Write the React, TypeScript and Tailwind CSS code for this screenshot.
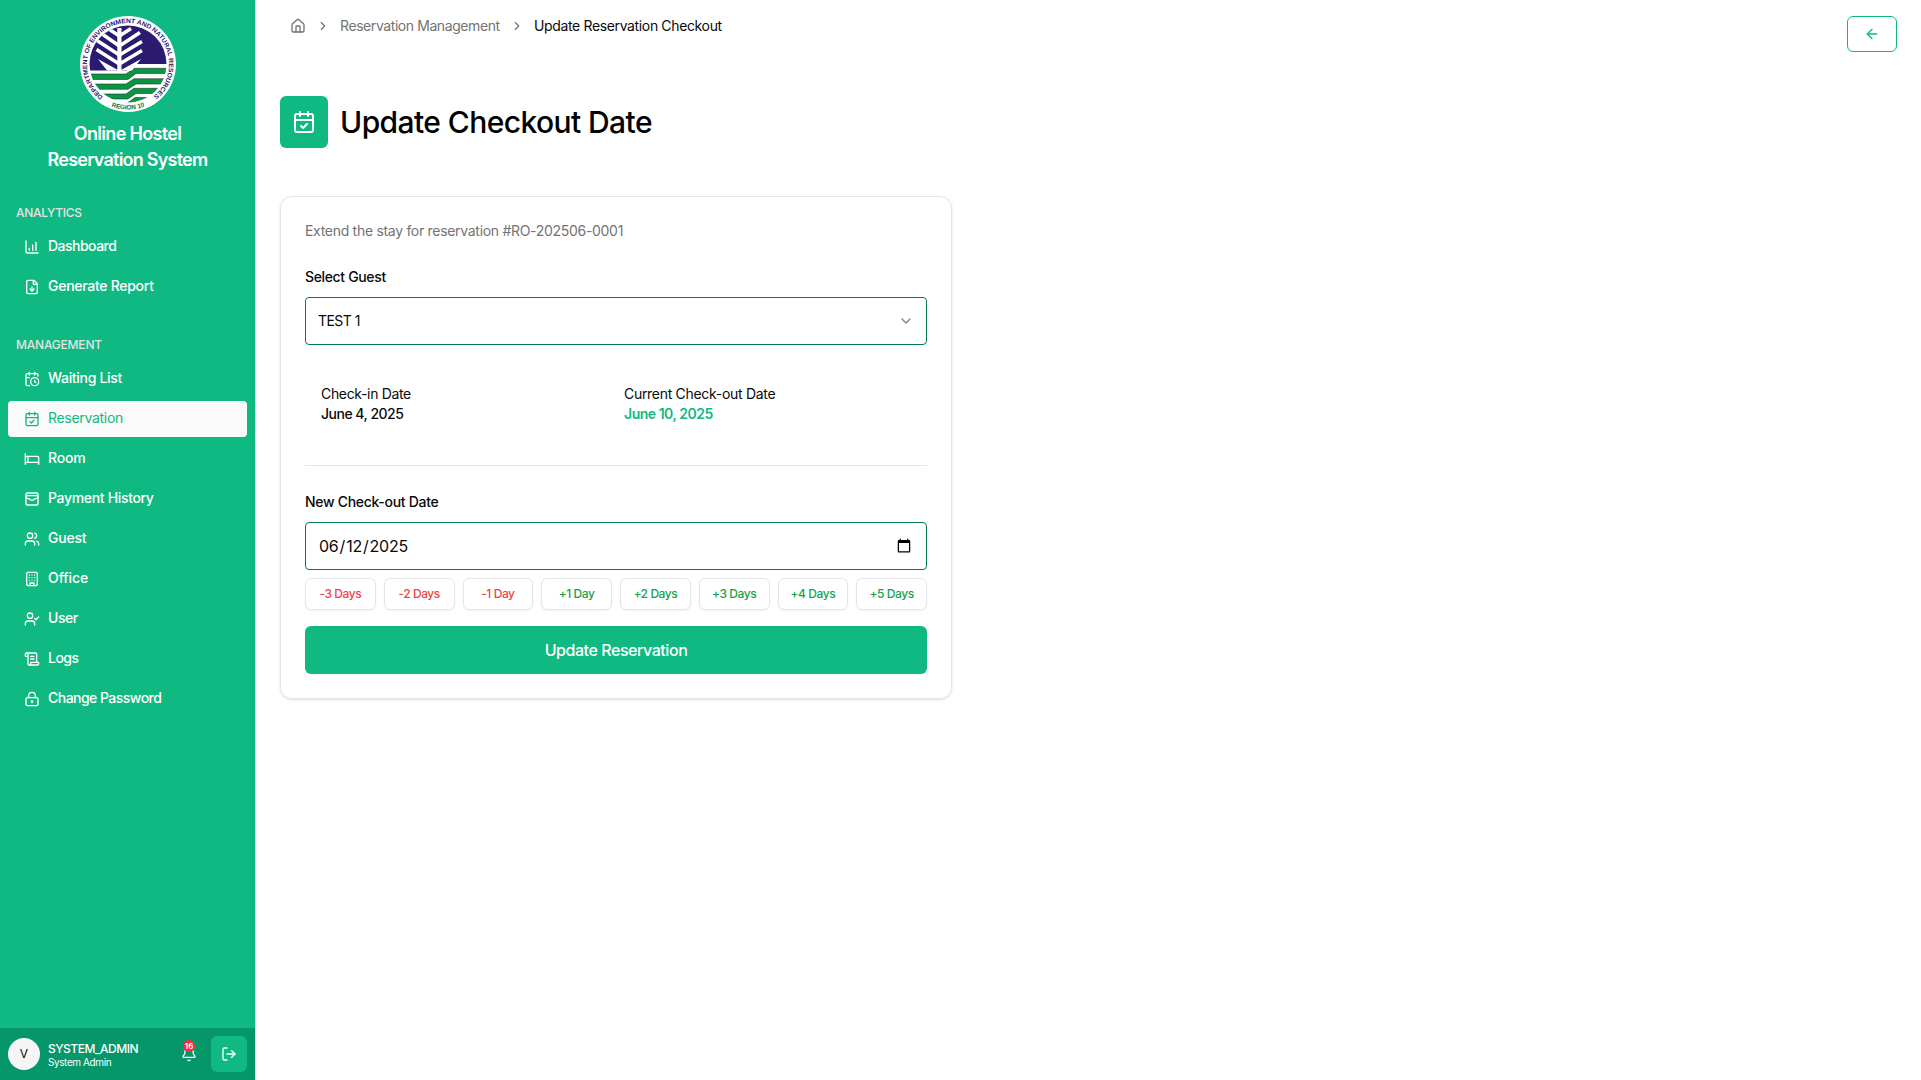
import React from "react";
import {
  ArrowLeft,
  Bed,
  Bell,
  CalendarCheck,
  CalendarClock,
  ChartColumnIncreasing,
  ChevronDown,
  ChevronRight,
  FileDown,
  House,
  LockKeyhole,
  LogOut,
  ScrollText,
  UserCheck,
  Users,
  WalletCards,
} from "lucide-react";

function OfficeBuilding({ className }: { className?: string }) {
  return (
    <svg
      viewBox="0 0 24 24"
      fill="none"
      stroke="currentColor"
      strokeWidth="2"
      strokeLinecap="round"
      strokeLinejoin="round"
      className={className}
    >
      <rect width="16" height="20" x="4" y="2" rx="2" />
      <path d="M9 22v-4h6v4M8 6h.01M16 6h.01M12 6h.01M12 10h.01M12 14h.01M16 10h.01M16 14h.01M8 10h.01M8 14h.01" />
    </svg>
  );
}

const analytics = [
  { label: "Dashboard", icon: ChartColumnIncreasing, track: "tracking-[-0.52px]" },
  { label: "Generate Report", icon: FileDown, track: "tracking-[-0.28px]" },
];

const management = [
  { label: "Waiting List", icon: CalendarClock, track: "tracking-[-0.3px]" },
  { label: "Reservation", icon: CalendarCheck, track: "tracking-[-0.3px]", active: true },
  { label: "Room", icon: Bed, track: "tracking-[-0.2px]" },
  { label: "Payment History", icon: WalletCards, track: "tracking-[-0.33px]" },
  { label: "Guest", icon: Users, track: "tracking-[-0.2px]" },
  { label: "Office", icon: OfficeBuilding, track: "tracking-[-0.1px]" },
  { label: "User", icon: UserCheck, track: "tracking-[-0.45px]" },
  { label: "Logs", icon: ScrollText, track: "tracking-[-0.5px]" },
  { label: "Change Password", icon: LockKeyhole, track: "tracking-[-0.53px]" },
];

const dayOffsets = ["-3 Days", "-2 Days", "-1 Day", "+1 Day", "+2 Days", "+3 Days", "+4 Days", "+5 Days"];

function Seal() {
  return (
    <svg viewBox="0 0 96 96" className="size-24" role="img" aria-label="Department seal">
      <defs>
        <clipPath id="disc">
          <circle cx="48" cy="48" r="38.500" />
        </clipPath>
        <path id="arcTop" d="M 23.9 81.2 A 41 41 0 1 1 72.1 81.2" />
        <path id="arcBottom" d="M 20.500 84.300 A 45.500 45.500 0 0 0 75.500 84.300" />
      </defs>
      <circle cx="48" cy="48" r="48" fill="#fff" />
      <g clipPath="url(#disc)">
        <rect width="96" height="96" fill="#fff" />
        <path d="M0 0H96V48H54L47 54.500H0Z" fill="#2a1a70" />
        <g stroke="#1d3a2a" strokeWidth="0.600" fill="#0b9444">
          <path d="M0 58H46L54 52.300H96V57.500H56L48 63.500H0Z" />
          <path d="M0 68H46L54 62.700H96V68H56L48 73.300H0Z" />
          <path d="M0 78H46L54 72.300H96V77.500H56L48 83H0Z" />
          <path d="M46 88L55 81.500H96V90H46Z" />
        </g>
        <g stroke="#fff" fill="none">
          <path d="M39.400 12V57" strokeWidth="4.200" />
          <path
            strokeWidth="3.500"
            d="M39.400 20L28 12.500M39.400 30L20 16.500M39.400 39L17 24.500M39.400 48L16.500 33.500M39.400 20L51 12.500M39.400 30L60 16.500M39.400 39L62 25.500M39.400 48L62 34.500"
          />
        </g>
        <path d="M18 43L37 53.500H42L61 43L52 54.500H27Z" fill="#fff" />
      </g>
      <text className="font-['Liberation_Sans'] font-bold" fontSize="6.400" fill="#2a1a70">
        <textPath href="#arcTop" startOffset="1" textLength="203" lengthAdjust="spacingAndGlyphs">
          DEPARTMENT OF ENVIRONMENT AND NATURAL RESOURCES
        </textPath>
      </text>
      <text className="font-['Liberation_Sans'] font-bold" fontSize="6.400" fill="#14713c">
        <textPath href="#arcBottom" startOffset="50%" textAnchor="middle">
          REGION 10
        </textPath>
      </text>
    </svg>
  );
}

type Item = { label: string; icon: React.ElementType; track: string; active?: boolean };

function NavList({ title, track, items }: { title: string; track: string; items: Item[] }) {
  return (
    <section className="px-2">
      <h2 className={`flex h-8 items-center px-2 text-xs font-medium text-[#e2e4e3] ${track}`}>{title}</h2>
      <ul className="flex flex-col gap-1">
        {items.map(({ label, icon: Icon, track: itemTrack, active }) => (
          <li
            key={label}
            className={`flex h-9 items-center gap-2 rounded px-4 text-sm ${
              active ? "bg-[#fafafa] text-[#10b981]" : "font-medium text-white"
            }`}
          >
            <Icon className="size-4 shrink-0" />
            <span className={`pb-0.5 ${itemTrack}`}>{label}</span>
          </li>
        ))}
      </ul>
    </section>
  );
}

export default function App() {
  return (
    <div className="flex h-screen overflow-hidden bg-white font-[Inter,sans-serif] text-[#0a0a0a]">
      <aside className="flex w-64 shrink-0 flex-col border-r border-gray-200 bg-[#10b981]">
        <div className="flex flex-col items-center pt-4">
          <Seal />
          <h1 className="mt-[9px] text-center text-lg leading-[26px] font-semibold text-white">
            <span className="tracking-[-0.68px]">Online Hostel</span>
            <br />
            <span className="tracking-[-0.77px]">Reservation System</span>
          </h1>
        </div>
        <nav className="mt-6 flex flex-1 flex-col gap-6">
          <NavList title="ANALYTICS" track="tracking-[-0.3px]" items={analytics} />
          <NavList title="MANAGEMENT" track="tracking-[-0.2px]" items={management} />
        </nav>
        <footer className="flex h-[52px] items-center bg-[#059669] px-2">
          <div className="flex size-8 items-center justify-center rounded-full bg-[#f5f5f5] text-xs">V</div>
          <div className="ml-2 flex-1 pt-px text-white">
            <p className="text-xs leading-[14px] font-medium tracking-[-0.5px]">SYSTEM_ADMIN</p>
            <p className="text-[10px] leading-3 tracking-[-0.4px]">System Admin</p>
          </div>
          <div className="relative mr-[14px]">
            <Bell className="size-4 text-white" />
            <span className="absolute -top-[6px] left-[2px] flex size-3 items-center justify-center rounded-full bg-red-500 text-[8px] font-semibold text-white">
              16
            </span>
          </div>
          <button className="flex size-9 items-center justify-center rounded-md bg-[#10b981] text-white">
            <LogOut className="size-4" />
          </button>
        </footer>
      </aside>

      <main className="flex-1 px-6">
        <header className="flex h-[52px] items-start justify-between">
          <nav className="flex h-[51px] items-center pl-[10px] text-sm text-[#737373]">
            <House className="size-4" />
            <ChevronRight className="ml-[10px] size-3.5" />
            <span className="ml-[10px] w-[160px] tracking-[-0.42px] whitespace-nowrap">Reservation Management</span>
            <ChevronRight className="ml-[10px] size-3.5" />
            <span className="ml-[10px] tracking-[-0.36px] text-[#0a0a0a]">Update Reservation Checkout</span>
          </nav>
          <button className="mt-4 flex h-9 w-[50px] items-center justify-center rounded-md border border-[#10b981] text-[#10b981]">
            <ArrowLeft className="size-4" />
          </button>
        </header>

        <div className="mt-11 flex items-center gap-3">
          <div className="flex h-[52px] w-12 items-center justify-center rounded-md bg-[#10b981] text-white">
            <CalendarCheck className="size-6" />
          </div>
          <h2 className="text-3xl font-medium tracking-[-0.58px] text-black">Update Checkout Date</h2>
        </div>

        <section className="mt-12 w-[672px] rounded-xl border border-[#e5e5e5] p-6 shadow-sm">
          <p className="text-sm leading-5 tracking-[-0.3px] text-[#737373]">
            Extend the stay for reservation #RO-202506-0001
          </p>
          <p className="mt-[26px] text-sm leading-5 font-medium tracking-[-0.35px]">Select Guest</p>
          <button className="mt-[10px] flex h-12 w-full items-center justify-between rounded border border-[#047857] px-3 text-sm">
            <span className="tracking-[-0.55px]">TEST 1</span>
            <ChevronDown className="size-4 opacity-50" />
          </button>
          <div className="mt-[39px] grid grid-cols-2 gap-4 px-4 text-sm leading-5">
            <div>
              <p className="tracking-[-0.34px]">Check-in Date</p>
              <p className="font-medium tracking-[-0.5px]">June 4, 2025</p>
            </div>
            <div>
              <p className="tracking-[-0.3px]">Current Check-out Date</p>
              <p className="font-semibold tracking-[-0.48px] text-[#10b981]">June 10, 2025</p>
            </div>
          </div>
          <hr className="mt-[41px] border-[#e5e5e5]" />
          <p className="mt-[26px] text-sm leading-5 font-medium tracking-[-0.3px]">New Check-out Date</p>
          <input
            type="date"
            defaultValue="2025-06-12"
            className="mt-[10px] block h-12 w-full rounded border border-[#047857] px-3 text-base tracking-[-0.22px]"
          />
          <div className="mt-2 grid grid-cols-8 gap-2">
            {dayOffsets.map((label) => (
              <button
                key={label}
                className={`h-8 rounded-md border border-[#e5e5e5] text-xs font-medium tracking-[-0.42px] shadow-xs ${
                  label.startsWith("-") ? "text-[#ef4444]" : "text-[#16a34a]"
                }`}
              >
                {label}
              </button>
            ))}
          </div>
          <button className="mt-4 h-12 w-full rounded-md bg-[#10b981] text-base font-medium tracking-[-0.44px] text-white shadow-xs">
            Update Reservation
          </button>
        </section>
      </main>
    </div>
  );
}
